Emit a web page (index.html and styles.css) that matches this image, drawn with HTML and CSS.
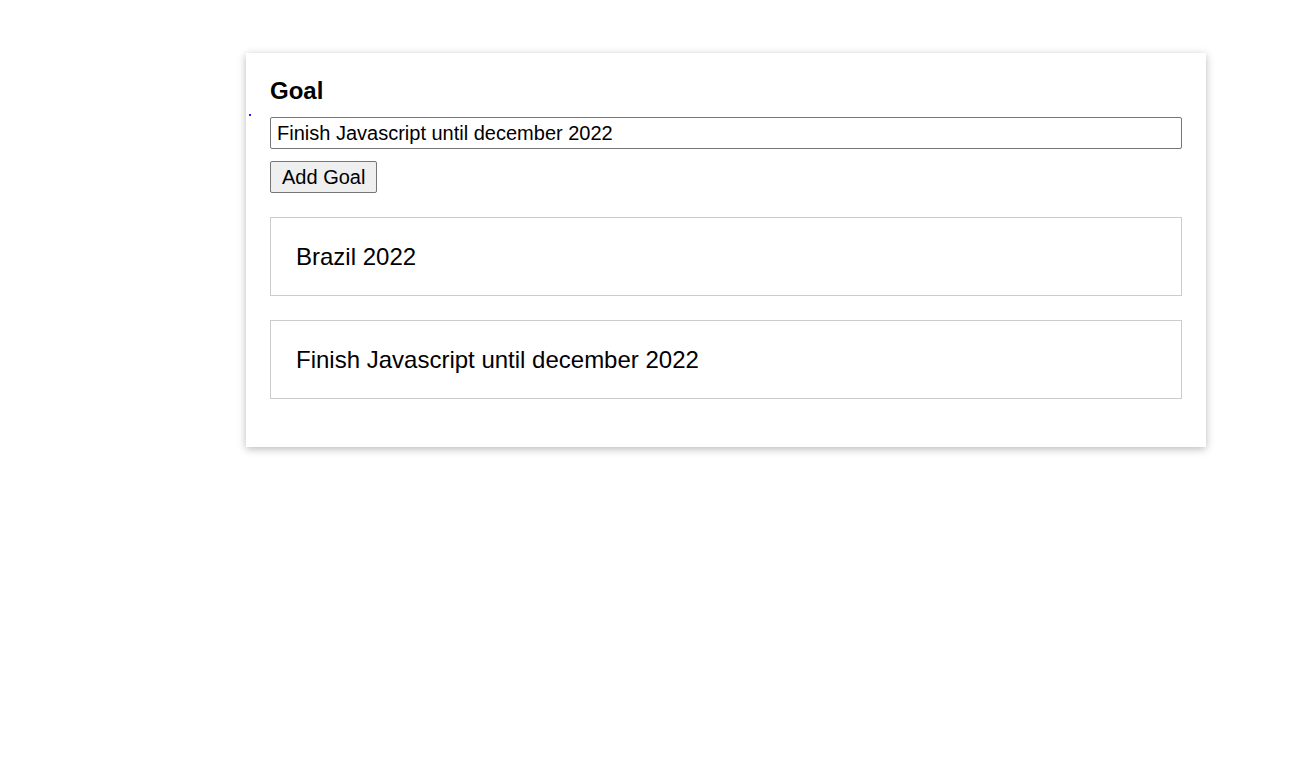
FILE: index.html
```html
<!DOCTYPE html>
<html>
<head>
<meta charset="utf-8">
<link rel="stylesheet" href="styles.css">
<title>Goals</title>
</head>
<body>
<main class="page">
  <section class="card">
    <span class="dot"></span>
    <form class="goal-form">
      <label class="goal-label" for="goal">Goal</label>
      <input class="goal-input" id="goal" type="text" value="Finish Javascript until december 2022">
      <button class="goal-button" type="button">Add Goal</button>
    </form>
    <ul class="goal-list">
      <li class="goal-item">Brazil 2022</li>
      <li class="goal-item">Finish Javascript until december 2022</li>
    </ul>
  </section>
</main>
</body>
</html>
```

FILE: styles.css
```css
* { box-sizing: border-box; }
html, body { margin: 0; padding: 0; background: #fff; }
body { font-family: "Liberation Sans", Arial, sans-serif; color: #000; min-height: 778px; }
.page { padding: 53px 0 0 246px; }
.card {
  position: relative;
  width: 960px;
  padding: 24px;
  background: #fff;
  box-shadow: 0 2px 8px rgba(0, 0, 0, 0.28);
}
.dot {
  position: absolute;
  left: 3px;
  top: 61px;
  width: 2px;
  height: 2px;
  background: #2020ff;
}
.goal-form { display: flex; flex-direction: column; align-items: flex-start; }
.goal-label {
  display: block;
  font-size: 24px;
  font-weight: bold;
  line-height: 28px;
  margin: 0 0 12px 0;
}
.goal-input {
  width: 100%;
  height: 32px;
  font-family: "Liberation Sans", Arial, sans-serif;
  font-size: 20px;
  padding: 0 6px;
  border: 1px solid #767676;
  border-radius: 2px;
  color: #000;
  margin: 0 0 12px 0;
}
.goal-button {
  height: 32px;
  font-family: "Liberation Sans", Arial, sans-serif;
  font-size: 20px;
  padding: 0 11px;
  background: #efefef;
  border: 1px solid #767676;
  border-radius: 2px;
  color: #000;
}
.goal-list { list-style: none; margin: 24px 0 24px 0; padding: 0; display: flex; flex-direction: column; gap: 24px; }
.goal-item {
  border: 1px solid #ccc;
  padding: 25px 24px 24px 25px;
  font-size: 24px;
  line-height: 28px;
}
```
